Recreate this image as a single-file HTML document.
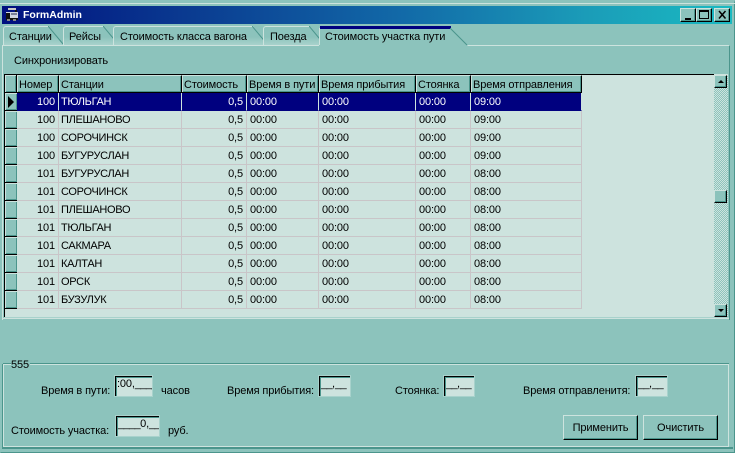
<!DOCTYPE html>
<html><head><meta charset="utf-8"><style>
html,body{margin:0;padding:0}
body{width:735px;height:453px;overflow:hidden;position:relative;background:#8cc3bc;font:11px "Liberation Sans",sans-serif;color:#000;letter-spacing:-0.12px}
.a{position:absolute}
.t{position:absolute;white-space:nowrap;line-height:14px;height:14px}
.tab{position:absolute;top:26px;height:19px;background:linear-gradient(#8cc3bc,#8cc3bc 55%,#a8d2cc);border-top:1px solid #cde3de;border-left:1px solid #cde3de;box-sizing:border-box;line-height:20px;padding-left:6px;white-space:nowrap;border-radius:3px 0 0 0}
.btn{position:absolute;box-sizing:border-box;background:#8cc3bc;border-top:1px solid #cde3de;border-left:1px solid #cde3de;border-right:1px solid #000;border-bottom:1px solid #000;box-shadow:inset -1px -1px 0 #4b958c}
.hd{position:absolute;top:75px;height:17px;box-sizing:border-box;background:#8cc3bc;border-top:1px solid #cde3de;border-left:1px solid #cde3de;border-right:1px solid #000;padding-top:1px;line-height:16px;padding-left:1px;white-space:nowrap;overflow:hidden;box-shadow:inset -1px -1px 0 #4b958c}
.ind{position:absolute;left:5px;width:12px;height:17px;box-sizing:border-box;background:#8cc3bc;border-top:1px solid #cde3de;border-left:1px solid #cde3de;box-shadow:inset -1px -1px 0 #4b958c}
.inp{position:absolute;box-sizing:border-box;background:#cde3de;border-top:1px solid #000;border-left:1px solid #000;box-shadow:0 0 0 1px #a8d2cc,inset 1px 1px 0 #4b958c;height:20px;line-height:15px;overflow:hidden;white-space:nowrap}
.inp b{font-weight:normal;letter-spacing:-0.6px}
table{position:absolute;left:17px;top:93px;border-collapse:separate;border-spacing:0;table-layout:fixed;width:565px}
td{height:15px;padding:2px 3px 0 3px;vertical-align:top;box-sizing:content-box;border-right:1px solid #c9c5c8;border-bottom:1px solid #c9c5c8;line-height:15px;white-space:nowrap;overflow:hidden}
td.n{text-align:right}
td:nth-child(2){padding-left:2px;letter-spacing:-0.3px}
tr.s td{background:#00007f;color:#fff;border-color:#cde3de;border-bottom-color:#00007f}
</style></head><body>
<!-- window frame -->
<div class="a" style="left:0;top:0;width:735px;height:453px;box-sizing:border-box;border-top:3px solid #8cc3bc;border-left:1px solid #8cc3bc;border-right:1px solid #4b958c;border-bottom:1px solid #4b958c"></div>
<div class="a" style="left:0;top:3px;width:735px;height:1px;background:#cde3de"></div>
<div class="a" style="left:2px;top:6px;width:730px;height:18px;background:linear-gradient(90deg,#00107f 0,#0a3a90 25%,#126aa8 55%,#1b9cb8 80%,#1abac2 100%)"></div>
<!-- icon -->
<svg class="a" style="left:5px;top:7px" width="15" height="15" viewBox="0 0 15 15"><rect x="1" y="5" width="12" height="6" fill="#cfd4e0"/><rect x="1" y="6" width="4" height="5" fill="#111"/><rect x="6" y="6" width="6" height="2" fill="#7a7f99"/><rect x="1" y="11" width="12" height="2" fill="#111"/><rect x="3" y="1" width="8" height="2" fill="#c9c9c9"/><rect x="10" y="3" width="2" height="2" fill="#111"/><rect x="2" y="12" width="3" height="2" fill="#888"/><rect x="8" y="12" width="3" height="2" fill="#888"/></svg>
<div class="t" style="left:23px;top:8px;color:#fff;font-weight:bold;font-size:10.5px;letter-spacing:0">FormAdmin</div>
<!-- window buttons -->
<div class="btn" style="left:680px;top:8px;width:16px;height:14px"><div class="a" style="left:4px;top:9px;width:6px;height:2px;background:#000"></div></div>
<div class="btn" style="left:696px;top:8px;width:16px;height:14px"><div class="a" style="left:2px;top:1px;width:10px;height:9px;box-sizing:border-box;border:1px solid #000;border-top-width:2px"></div></div>
<div class="btn" style="left:714px;top:8px;width:16px;height:14px"><svg class="a" style="left:2px;top:1px" width="11" height="10" viewBox="0 0 11 10"><path d="M2 1l6.500 7.500M8.500 1L2 8.500" stroke="#000" stroke-width="1.500" fill="none"/></svg></div>
<!-- tab page -->
<div class="a" style="left:2px;top:45px;width:728px;height:275px;box-sizing:border-box;border-top:1px solid #cde3de;border-left:1px solid #cde3de;border-right:1px solid #4b958c"></div>
<div class="a" style="left:2px;top:44px;width:730px;height:1px;background:#8cc3bc"></div>
<!-- tabs -->
<div class="tab" style="left:3px;width:60px;clip-path:polygon(0 0,46px 0,60px 19px,0 19px)"><span style="position:relative;left:-1px">Станции</span></div>
<svg class="a" style="left:48px;top:26px" width="16" height="20"><path d="M0 0L15 18" stroke="#4b958c" fill="none"/></svg>
<div class="tab" style="left:63px;width:56px;clip-path:polygon(0 0,40px 0,56px 19px,0 19px)"><span style="position:relative;left:-1px">Рейсы</span></div>
<svg class="a" style="left:103px;top:26px" width="16" height="20"><path d="M0 0L15 18" stroke="#4b958c" fill="none"/></svg>
<div class="tab" style="left:113px;width:155px;clip-path:polygon(0 0,140px 0,155px 19px,0 19px)">Стоимость класса вагона</div>
<svg class="a" style="left:252px;top:26px" width="16" height="20"><path d="M0 0L15 18" stroke="#4b958c" fill="none"/></svg>
<div class="tab" style="left:263px;width:60px;clip-path:polygon(0 0,46px 0,60px 19px,0 19px)">Поезда</div>
<svg class="a" style="left:309px;top:26px" width="16" height="20"><path d="M0 0L15 18" stroke="#4b958c" fill="none"/></svg>
<div class="a" style="left:319px;top:28px;width:149px;height:18px;background:#8cc3bc;clip-path:polygon(0 0,132px 0,149px 18px,0 18px)"></div>
<div class="a" style="left:320px;top:26px;width:131px;height:3px;background:#00007f"></div>
<div class="a" style="left:319px;top:28px;width:1px;height:17px;background:#cde3de"></div>
<svg class="a" style="left:450px;top:28px" width="20" height="18"><path d="M0 0L17 17" stroke="#4b958c" fill="none"/></svg>
<div class="t" style="left:325px;top:30px">Стоимость участка пути</div>
<div class="t" style="left:14px;top:54px">Синхронизировать</div>
<!-- grid -->
<div class="a" style="left:4px;top:74px;width:724px;height:244px;background:#cde3de"></div>
<div class="a" style="left:4px;top:74px;width:710px;height:1px;background:#000"></div>
<div class="a" style="left:4px;top:74px;width:1px;height:244px;background:#000"></div>
<div class="a" style="left:5px;top:92px;width:577px;height:1px;background:#000"></div>
<div class="a" style="left:581px;top:75px;width:1px;height:18px;background:#000"></div>
<div class="ind" style="top:75px;border-right:1px solid #000"></div>
<div class="hd" style="left:17px;width:42px">Номер</div>
<div class="hd" style="left:59px;width:123px">Станции</div>
<div class="hd" style="left:182px;width:65px">Стоимость</div>
<div class="hd" style="left:247px;width:72px">Время в пути</div>
<div class="hd" style="left:319px;width:97px">Время прибытия</div>
<div class="hd" style="left:416px;width:55px">Стоянка</div>
<div class="hd" style="left:471px;width:111px">Время отправления</div>
<!-- indicator column -->
<div class="a" style="left:16px;top:75px;width:1px;height:234px;background:#000"></div>
<div class="ind" style="top:93px"></div><div class="ind" style="top:111px"></div><div class="ind" style="top:129px"></div><div class="ind" style="top:147px"></div><div class="ind" style="top:165px"></div><div class="ind" style="top:183px"></div><div class="ind" style="top:201px"></div><div class="ind" style="top:219px"></div><div class="ind" style="top:237px"></div><div class="ind" style="top:255px"></div><div class="ind" style="top:273px"></div><div class="ind" style="top:291px"></div>
<div class="a" style="left:5px;top:110px;width:12px;height:1px;background:#000"></div><div class="a" style="left:5px;top:128px;width:12px;height:1px;background:#000"></div><div class="a" style="left:5px;top:146px;width:12px;height:1px;background:#000"></div><div class="a" style="left:5px;top:164px;width:12px;height:1px;background:#000"></div><div class="a" style="left:5px;top:182px;width:12px;height:1px;background:#000"></div><div class="a" style="left:5px;top:200px;width:12px;height:1px;background:#000"></div><div class="a" style="left:5px;top:218px;width:12px;height:1px;background:#000"></div><div class="a" style="left:5px;top:236px;width:12px;height:1px;background:#000"></div><div class="a" style="left:5px;top:254px;width:12px;height:1px;background:#000"></div><div class="a" style="left:5px;top:272px;width:12px;height:1px;background:#000"></div><div class="a" style="left:5px;top:290px;width:12px;height:1px;background:#000"></div><div class="a" style="left:5px;top:308px;width:12px;height:1px;background:#000"></div>
<svg class="a" style="left:7px;top:96px" width="8" height="12"><path d="M1 0L7 6L1 12Z" fill="#000"/></svg>
<table><colgroup><col style="width:42px"><col style="width:123px"><col style="width:65px"><col style="width:72px"><col style="width:97px"><col style="width:55px"><col style="width:111px"></colgroup>
<tr class="s"><td class="n">100</td><td>ТЮЛЬГАН</td><td class="n">0,5</td><td>00:00</td><td>00:00</td><td>00:00</td><td>09:00</td></tr>
<tr><td class="n">100</td><td>ПЛЕШАНОВО</td><td class="n">0,5</td><td>00:00</td><td>00:00</td><td>00:00</td><td>09:00</td></tr>
<tr><td class="n">100</td><td>СОРОЧИНСК</td><td class="n">0,5</td><td>00:00</td><td>00:00</td><td>00:00</td><td>09:00</td></tr>
<tr><td class="n">100</td><td>БУГУРУСЛАН</td><td class="n">0,5</td><td>00:00</td><td>00:00</td><td>00:00</td><td>09:00</td></tr>
<tr><td class="n">101</td><td>БУГУРУСЛАН</td><td class="n">0,5</td><td>00:00</td><td>00:00</td><td>00:00</td><td>08:00</td></tr>
<tr><td class="n">101</td><td>СОРОЧИНСК</td><td class="n">0,5</td><td>00:00</td><td>00:00</td><td>00:00</td><td>08:00</td></tr>
<tr><td class="n">101</td><td>ПЛЕШАНОВО</td><td class="n">0,5</td><td>00:00</td><td>00:00</td><td>00:00</td><td>08:00</td></tr>
<tr><td class="n">101</td><td>ТЮЛЬГАН</td><td class="n">0,5</td><td>00:00</td><td>00:00</td><td>00:00</td><td>08:00</td></tr>
<tr><td class="n">101</td><td>САКМАРА</td><td class="n">0,5</td><td>00:00</td><td>00:00</td><td>00:00</td><td>08:00</td></tr>
<tr><td class="n">101</td><td>КАЛТАН</td><td class="n">0,5</td><td>00:00</td><td>00:00</td><td>00:00</td><td>08:00</td></tr>
<tr><td class="n">101</td><td>ОРСК</td><td class="n">0,5</td><td>00:00</td><td>00:00</td><td>00:00</td><td>08:00</td></tr>
<tr><td class="n">101</td><td>БУЗУЛУК</td><td class="n">0,5</td><td>00:00</td><td>00:00</td><td>00:00</td><td>08:00</td></tr>
</table>
<!-- scrollbar -->
<div class="a" style="left:714px;top:75px;width:14px;height:243px;background:repeating-conic-gradient(#cde3de 0 25%,#8cc3bc 0 50%) 0 0/2px 2px"></div>
<div class="btn" style="left:714px;top:75px;width:13px;height:13px"><svg class="a" style="left:2px;top:3px" width="8" height="5"><path d="M1 4L4 1L7 4Z" fill="#000"/></svg></div>
<div class="btn" style="left:714px;top:304px;width:13px;height:13px"><svg class="a" style="left:2px;top:3px" width="8" height="5"><path d="M1 1H7L4 4Z" fill="#000"/></svg></div>
<div class="btn" style="left:714px;top:190px;width:13px;height:13px"></div>
<div class="a" style="left:4px;top:317px;width:725px;height:2px;background:#a8d2cc"></div>
<div class="a" style="left:3px;top:318px;width:726px;height:1px;background:#cde3de"></div>
<!-- group box -->
<div class="a" style="left:3px;top:364px;width:726px;height:83px;box-sizing:border-box;border:1px solid #cde3de;box-shadow:0 -1px 0 #4b958c,-1px 0 0 #4b958c"></div>
<div class="a" style="left:2px;top:447px;width:731px;height:2px;background:#4b958c"></div>
<div class="t" style="left:11px;top:358px;background:#8cc3bc;padding-right:1px">555</div>
<div class="t" style="left:41px;top:384px">Время в пути:</div>
<div class="inp" style="left:115px;top:376px;width:37px;padding-left:1px">:00,<b>____</b></div>
<div class="t" style="left:161px;top:384px">часов</div>
<div class="t" style="left:227px;top:384px">Время прибытия:</div>
<div class="inp" style="left:319px;top:376px;width:31px;padding-left:1px"><b>__</b>,<b>__</b></div>
<div class="t" style="left:395px;top:384px">Стоянка:</div>
<div class="inp" style="left:444px;top:376px;width:30px;padding-left:1px"><b>__</b>,<b>__</b></div>
<div class="t" style="left:523px;top:384px">Время отправленитя:</div>
<div class="inp" style="left:636px;top:376px;width:31px;padding-left:1px"><b>__</b>,<b>__</b></div>
<div class="t" style="left:11px;top:424px">Стоимость участка:</div>
<div class="inp" style="left:116px;top:416px;width:43px;padding-left:1px"><b>____</b>0,<b>__</b></div>
<div class="t" style="left:168px;top:424px">руб.</div>
<div class="btn" style="left:563px;top:415px;width:75px;height:25px;text-align:center;line-height:24px">Применить</div>
<div class="btn" style="left:643px;top:415px;width:75px;height:25px;text-align:center;line-height:24px">Очистить</div>
</body></html>
